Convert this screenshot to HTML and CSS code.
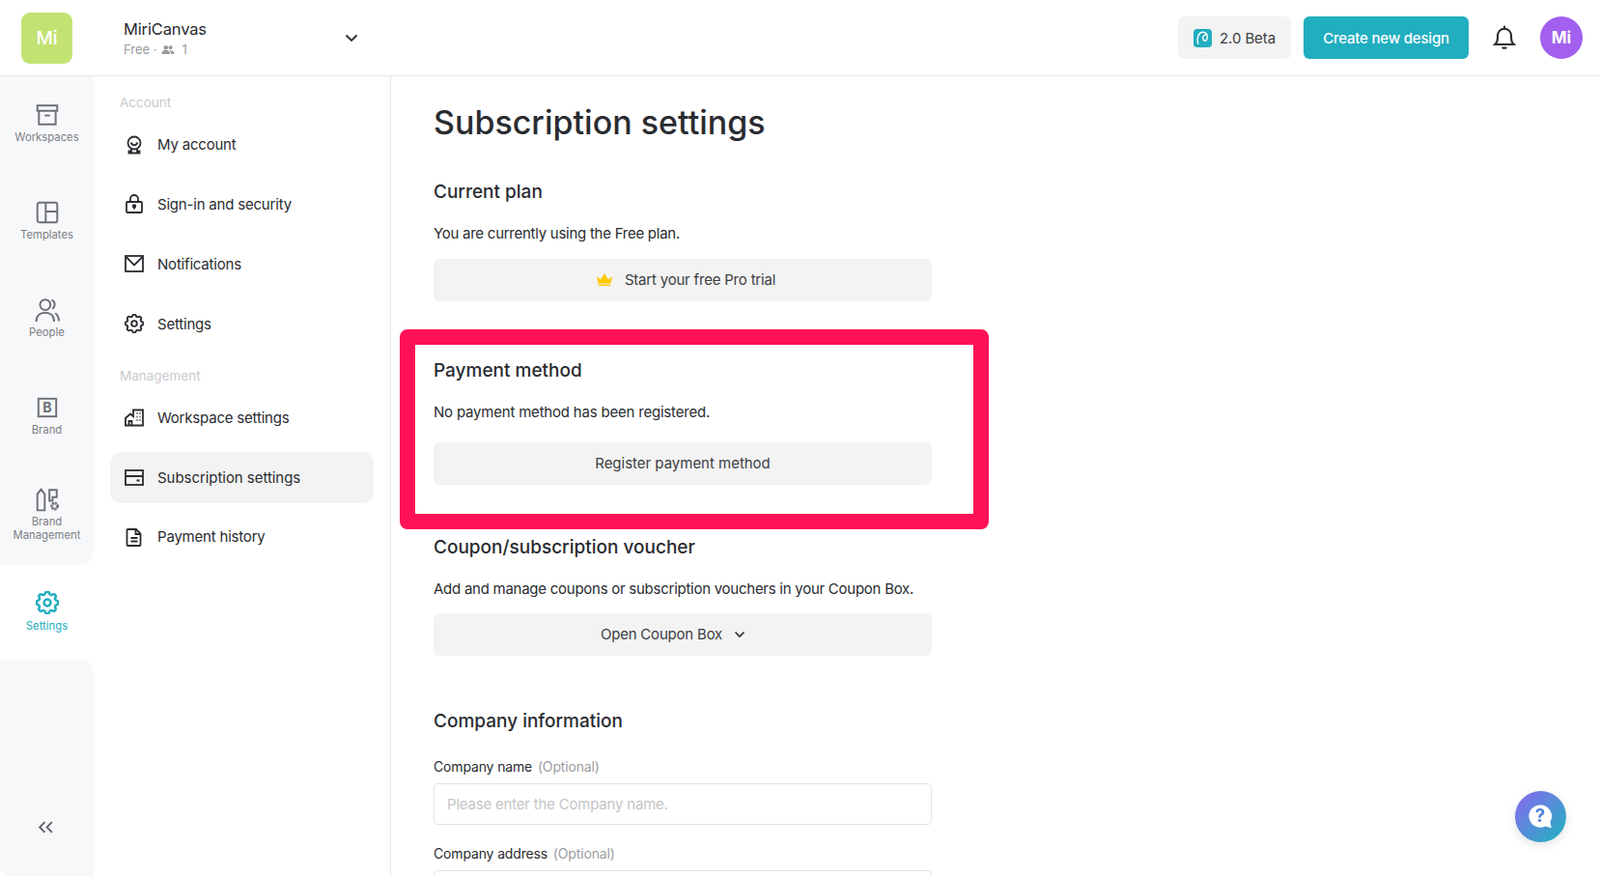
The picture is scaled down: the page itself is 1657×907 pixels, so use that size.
FILE: index.html
```html
<!DOCTYPE html>
<html lang="en">
<head>
<meta charset="UTF-8" />
<meta name="viewport" content="width=device-width, initial-scale=1" />
<title>Subscription settings</title>
<link rel="stylesheet" href="styles.css">
</head>
<body>

<svg class="defs" width="0" height="0">
  <symbol id="gear" viewBox="2.5 2.5 19 19">
    <path d="M10.325 4.317c.426-1.756 2.924-1.756 3.35 0a1.724 1.724 0 0 0 2.573 1.066c1.543-.94 3.31.826 2.37 2.37a1.724 1.724 0 0 0 1.065 2.572c1.756.426 1.756 2.924 0 3.35a1.724 1.724 0 0 0-1.066 2.573c.94 1.543-.826 3.31-2.37 2.37a1.724 1.724 0 0 0-2.572 1.065c-.426 1.756-2.924 1.756-3.35 0a1.724 1.724 0 0 0-2.573-1.066c-1.543.94-3.31-.826-2.37-2.37a1.724 1.724 0 0 0-1.065-2.572c-1.756-.426-1.756-2.924 0-3.35a1.724 1.724 0 0 0 1.066-2.573c-.94-1.543.826-3.31 2.37-2.37c1 .608 2.296.07 2.572-1.065z" />
    <circle cx="12" cy="12" r="2.700" />
  </symbol>
</svg>

<!-- Header -->
<header class="topbar">
  <div class="logo">Mi</div>
  <div class="team">
    <div class="team-name">MiriCanvas</div>
    <div class="team-sub">Free ·
      <svg class="group-icon" viewBox="0 0 16 12"><circle cx="5.500" cy="3.500" r="2.600" /><circle cx="11" cy="3.500" r="2.300" /><path d="M.5 11c0-3 2-4.600 5-4.600s5 1.600 5 4.600zM11.500 11c0-2-.6-3.400-1.800-4.400 2.800-.4 5.800.8 5.800 4.400z" /></svg>
      <span class="team-count">1</span>
    </div>
  </div>
  <svg class="team-chevron" viewBox="0 0 16 16"><path d="M2.500 5.500 8 11l5.500-5.500" /></svg>

  <div class="top-actions">
    <button class="beta-btn">
      <svg class="beta-icon" viewBox="0 0 20 20"><rect width="20" height="20" rx="4" fill="#21aebf" /><path d="M5 16C3 10.500 5.500 3.500 10.500 3.500c4 0 5.500 4 4.200 7.500-.9 2.600-3.600 2.600-4.200.2-.5-2.200.7-4.400 2.800-5" fill="none" stroke="#fff" stroke-width="1.500" stroke-linecap="round" /></svg>
      2.0 Beta
    </button>
    <button class="create-btn">Create new design</button>
    <svg class="bell" viewBox="0 0 24 24"><path d="M3 18.500h18c-1.600-1.500-2.500-3-2.500-6V10a6.500 6.500 0 0 0-13 0v2.500c0 3-.9 4.500-2.500 6z" /><path d="M12 1.500v2" /><path d="M10.500 21.800h3" /></svg>
    <div class="avatar">Mi</div>
  </div>
</header>

<div class="layout">

  <!-- Barra izquierda -->
  <nav class="rail">
    <div class="rail-group">
      <a class="rail-item">
        <svg viewBox="0 0 24 24"><path d="M2.500 3h19v5h-19z" /><path d="M4 8v13h16V8" /><path d="M9.500 12.500h5" /></svg>
        <span>Workspaces</span>
      </a>
      <a class="rail-item">
        <svg viewBox="0 0 24 24"><rect x="2.500" y="2.500" width="19" height="19" rx="2" /><path d="M10.500 2.500v19M10.500 11h11" /></svg>
        <span>Templates</span>
      </a>
      <a class="rail-item">
        <svg viewBox="0 0 24 24"><circle cx="10" cy="7" r="5" /><path d="M1.500 23c0-5.500 3.500-8.500 8.500-8.500s8.500 3 8.500 8.500" /><path d="M16 2.500c2.500 1 3.300 3 3 5-.2 1.400-1 2.500-2.300 3.200M19.500 15c2.300 1.500 3.500 4 3.500 7.500" /></svg>
        <span>People</span>
      </a>
      <a class="rail-item">
        <svg viewBox="0 0 24 24"><rect x="3.500" y="3.500" width="17" height="17" /><text x="12" y="16.500" class="brand-b">B</text></svg>
        <span>Brand</span>
      </a>
      <a class="rail-item rail-item-double">
        <svg viewBox="0 0 24 24"><path d="M2.500 22.500V7l3.500-4.500L9.500 7v15.500z" /><path d="M14 3h7v7h-4v3.500h-3z" /><circle cx="19" cy="18.500" r="2.800" stroke-dasharray="2 .6" stroke-width="2.500" /></svg>
        <span>Brand<br>Management</span>
      </a>
    </div>
    <a class="rail-item rail-item-active">
      <svg viewBox="0 0 24 24"><use href="#gear" /></svg>
      <span>Settings</span>
    </a>
    <div class="rail-bottom">
      <svg class="collapse" viewBox="0 0 16 12"><path d="M7 1 2 6l5 5M14 1 9 6l5 5" /></svg>
    </div>
  </nav>

  <!-- Menu de ajustes -->
  <aside class="side">
    <div class="side-label">Account</div>
    <a class="side-item">
      <svg viewBox="0 0 20 20"><circle cx="10" cy="8" r="6.500" /><path d="M6.500 7.500c1 2 2.200 2.800 3.500 2.800s2.500-.8 3.500-2.800" /><path d="M7 14v2.500H4.500v2h11v-2H13V14" /></svg>
      My account
    </a>
    <a class="side-item">
      <svg viewBox="0 0 20 20"><rect x="2" y="8" width="16" height="11" rx="1" /><path d="M6 8V5a4 4 0 0 1 8 0v3" /><circle class="solid" cx="10" cy="12.500" r="1.300" /><path d="M10 12.500v3" /></svg>
      Sign-in and security
    </a>
    <a class="side-item">
      <svg viewBox="0 0 20 20"><rect x="1" y="2" width="18" height="16" /><path d="M1 2.500l9 9 9-9" /></svg>
      Notifications
    </a>
    <a class="side-item">
      <svg viewBox="0 0 24 24"><use href="#gear" /></svg>
      Settings
    </a>

    <div class="side-label side-label-second">Management</div>
    <a class="side-item">
      <svg viewBox="0 0 20 20"><path d="M1 18.500V11l5-4.500 3 2.700V2.500h10v16z" /><path d="M4.500 18.500v-4.500h3v4.500M12.500 6h1M15.500 6h1M12.500 9.500h1M15.500 9.500h1M12.500 13h1M15.500 13h1" /></svg>
      Workspace settings
    </a>
    <a class="side-item side-item-active">
      <svg viewBox="0 0 20 20"><rect x="1" y="3" width="18" height="15" /><path d="M1 9h18M12.500 13.500h3" /></svg>
      Subscription settings
    </a>
    <a class="side-item">
      <svg viewBox="0 0 20 20"><path d="M3.500 2h8.500l4.500 4.500V18a1 1 0 0 1-1 1h-12a1 1 0 0 1-1-1V3a1 1 0 0 1 1-1z" /><path d="M11.500 2v5h5M6.500 11h7M6.500 14.500h7" /></svg>
      Payment history
    </a>
  </aside>

  <!-- Contenido -->
  <main class="content">
    <h1>Subscription settings</h1>

    <section class="block">
      <h2>Current plan</h2>
      <p>You are currently using the Free plan.</p>
      <button class="wide-btn wide-btn-trial">
        <svg class="crown" viewBox="0 0 18 14"><path d="M1 3.500 5 7l4-6.500L13 7l4-3.500-1.500 7.500h-13zM2.800 12h12.400v1.500H2.800z" /></svg>
        Start your free Pro trial
      </button>
    </section>

    <section class="block block-payment">
      <h2>Payment method</h2>
      <p>No payment method has been registered.</p>
      <button class="wide-btn wide-btn-register">Register payment method</button>
    </section>

    <section class="block block-coupon">
      <h2>Coupon/subscription voucher</h2>
      <p>Add and manage coupons or subscription vouchers in your Coupon Box.</p>
      <button class="wide-btn wide-btn-open">
        Open Coupon Box
        <svg class="small-chevron" viewBox="0 0 12 12"><path d="M1.500 3.500 6 8l4.500-4.500" /></svg>
      </button>
    </section>

    <section class="block block-company">
      <h2>Company information</h2>
      <label class="field-label">Company name <em>(Optional)</em></label>
      <input class="field" type="text" placeholder="Please enter the Company name." />
      <label class="field-label field-label-next">Company address <em>(Optional)</em></label>
      <input class="field" type="text" />
    </section>

    <!-- Recuadro rojo sobre el bloque de pago -->
    <div class="highlight"></div>
  </main>
</div>

<!-- Boton flotante de ayuda -->
<a class="help-float" aria-label="Help">
  <svg viewBox="0 0 30 30"><path d="M14 1.500a12.500 12.500 0 1 0 0 25c2 0 4-.5 5.600-1.300l6.900 1.800-1.400-6.700A12.500 12.500 0 0 0 14 1.500z" fill="#fff" /><text x="14" y="20.500" class="help-q">?</text></svg>
</a>

</body>
</html>
```

FILE: styles.css
```css
/* Reset y basicos */
* {
  margin: 0; padding: 0; box-sizing: border-box;
}
html, body {
  height: 100%;
  overflow: hidden;
  font-family: Inter, "Noto Sans", sans-serif;
  color: #2a2c31;
  background: #fff;
}
a { display: block; }
button { font-family: inherit; border: none; cursor: pointer; }
.defs { position: absolute; }

/* Header */
.topbar {
  height: 79px;
  display: flex;
  align-items: center;
  padding: 0 18px 0 22px;
  border-bottom: 1px solid #e6e6e6;
}
.logo {
  width: 53px;
  height: 53px;
  border-radius: 9px;
  background: #c2e373;
  color: #fff;
  font-size: 19px;
  font-weight: 500;
  display: flex;
  align-items: center;
  justify-content: center;
}
.team {
  margin-left: 53px;
  padding-top: 2px;
  width: 228px;
}
.team-name {
  font-size: 16.5px;
  line-height: 22px;
  letter-spacing: -0.15px;
}
.team-sub {
  font-size: 13px;
  line-height: 20px;
  color: #9a9ca1;
  display: flex;
  align-items: center;
  gap: 4px;
}
.group-icon { width: 14px; height: 11px; fill: #9a9ca1; }
.team-count { margin-left: 4px; }
.team-chevron {
  width: 16px;
  height: 16px;
  fill: none;
  stroke: #2a2c31;
  stroke-width: 1.8;
}
.top-actions {
  margin-left: auto;
  display: flex;
  align-items: center;
}
.beta-btn {
  width: 117px;
  height: 44px;
  border-radius: 6px;
  background: #f3f3f3;
  color: #3c3e44;
  font-size: 15px;
  letter-spacing: -0.1px;
  display: flex;
  align-items: center;
  justify-content: center;
  gap: 8px;
}
.beta-icon { width: 19px; height: 19px; }
.create-btn {
  margin-left: 13px;
  width: 171px;
  height: 44px;
  border-radius: 6px;
  background: #21aebf;
  color: #fff;
  font-size: 15px;
  font-weight: 500;
  letter-spacing: -0.2px;
}
.bell {
  margin-left: 24px;
  width: 26px;
  height: 26px;
  fill: none;
  stroke: #2a2c31;
  stroke-width: 1.9;
  stroke-linecap: round;
}
.avatar {
  margin-left: 24px;
  width: 44px;
  height: 44px;
  border-radius: 50%;
  background: #a25ff0;
  color: #fff;
  font-size: 17px;
  font-weight: 700;
  display: flex;
  align-items: center;
  justify-content: center;
}

/* Contenedor */
.layout {
  display: flex;
  height: 828px;
}

/* Barra izquierda */
.rail {
  width: 97px;
  flex: none;
  display: flex;
  flex-direction: column;
}
.rail-group {
  height: 506px;
  background: #f7f8fa;
  border-bottom-right-radius: 14px;
}
.rail-item {
  height: 101px;
  padding-top: 27px;
  text-align: center;
  color: #7c7f85;
  font-size: 11.3px;
  line-height: 14px;
}
.rail-item svg {
  width: 26px;
  height: 26px;
  display: block;
  margin: 0 auto 3px;
  fill: none;
  stroke: #6d7076;
  stroke-width: 1.8;
}
.rail-item-double {
  padding-top: 21px;
}
.rail-item-active {
  height: 98px;
  padding-top: 27px;
  color: #21aebf;
}
.rail-item-active svg {
  stroke: #21aebf;
  width: 24px;
  height: 24px;
  stroke-width: 2;
  margin-bottom: 5px;
}
.brand-b {
  font-size: 13px;
  font-weight: 700;
  text-anchor: middle;
  fill: #6d7076;
  stroke: none;
}
.rail-bottom {
  flex: 1;
  background: #f7f8fa;
  border-top-right-radius: 14px;
  border-bottom-left-radius: 10px;
  display: flex;
  justify-content: center;
  align-items: flex-end;
  padding: 0 2px 44px 0;
}
.collapse {
  width: 17px;
  height: 13px;
  fill: none;
  stroke: #5d6066;
  stroke-width: 1.7;
}

/* Menu de ajustes */
.side {
  width: 308px;
  flex: none;
  padding: 17px 17px 0;
  border-right: 1px solid #e6e6e6;
}
.side-label {
  padding-left: 10px;
  font-size: 13.5px;
  line-height: 20px;
  color: #c9cacd;
}
.side-label-second {
  margin-top: 17px;
}
.side-item {
  height: 53px;
  margin-top: 8.9px;
  padding-left: 15px;
  border-radius: 12px;
  display: flex;
  align-items: center;
  gap: 14px;
  font-size: 15px;
  letter-spacing: -0.2px;
}
.side-label + .side-item { margin-top: 7px; }
.side-item svg {
  width: 20px;
  height: 20px;
  flex: none;
  fill: none;
  stroke: #2a2c31;
  stroke-width: 1.8;
}
.side-item svg .solid { fill: #2a2c31; }
.side-item-active { background: #f3f3f3; letter-spacing: -0.05px; }

/* Contenido */
.content {
  position: relative;
  flex: 1;
  padding: 26px 0 0 44px;
}
h1 {
  font-size: 34px;
  line-height: 44px;
  font-weight: 500;
}
.block {
  width: 516px;
  margin-top: 37px;
}
h2 {
  font-size: 19px;
  line-height: 26px;
  font-weight: 500;
  letter-spacing: 0;
}
.block p {
  margin: 20px 0 16px;
  font-size: 15px;
  line-height: 20px;
  letter-spacing: -0.26px;
}
.block-payment { margin-top: 59px; }
.block-payment p { margin-bottom: 21px; letter-spacing: -0.2px; }
.block-coupon { margin-top: 52px; }
.block-coupon p { margin-bottom: 15px; }
.block-company { margin-top: 55px; }
.wide-btn {
  width: 100%;
  height: 44px;
  border-radius: 6px;
  background: #f3f3f3;
  color: #3c3e44;
  font-size: 15px;
  letter-spacing: -0.2px;
  display: flex;
  align-items: center;
  justify-content: center;
  gap: 12px;
}
.crown { width: 18px; height: 15px; fill: #ffc800; }
.wide-btn-trial { padding-left: 6px; padding-bottom: 1px; }
.wide-btn-register { letter-spacing: -0.02px; padding-bottom: 1px; }
.wide-btn-open { padding-right: 20px; padding-bottom: 1px; }
.small-chevron {
  width: 12px;
  height: 12px;
  fill: none;
  stroke: #2a2c31;
  stroke-width: 1.6;
}
.field-label {
  display: block;
  margin: 24px 0 7px;
  font-size: 14px;
  line-height: 20px;
  letter-spacing: -0.15px;
}
.field-label em {
  font-style: normal;
  color: #9a9ca1;
  margin-left: 2px;
}
.field-label-next { margin-top: 20px; }
.field {
  display: block;
  width: 100%;
  height: 43px;
  padding: 0 13px;
  border: 1px solid #e4e4e6;
  border-radius: 4px;
  font-family: inherit;
  font-size: 15px;
  letter-spacing: -0.2px;
}
.field::placeholder { color: #c4c5c8; }

/* Recuadro rojo */
.highlight {
  position: absolute;
  left: 9px;
  top: 262px;
  width: 610px;
  height: 207px;
  border: 16px solid #ff1157;
  border-radius: 8px;
  pointer-events: none;
}

/* Boton flotante */
.help-float {
  position: fixed;
  left: 1569px;
  top: 819px;
  width: 53px;
  height: 53px;
  border-radius: 50%;
  background: linear-gradient(135deg, #8b67f2, #1cb5bd);
  box-shadow: 0 3px 10px rgba(0,0,0,0.12);
  display: flex;
  align-items: center;
  justify-content: center;
}
.help-float svg { width: 28px; height: 28px; }
.help-q {
  font-size: 20px;
  font-weight: 700;
  text-anchor: middle;
  fill: #4f82d8;
}
```
